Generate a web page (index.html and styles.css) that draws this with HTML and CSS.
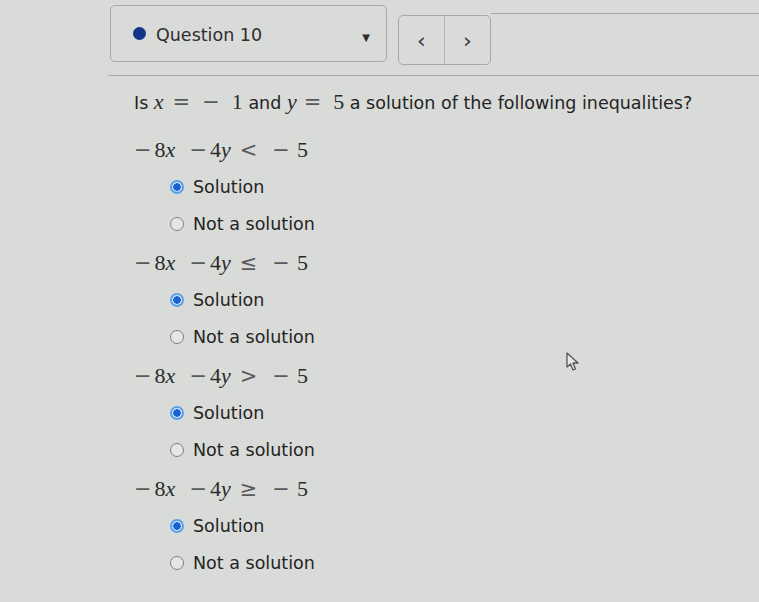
FILE: index.html
```html
<!DOCTYPE html>
<html>
<head>
<meta charset="utf-8">
<link rel="stylesheet" href="styles.css">
</head>
<body>
<div class="header">
  <div class="select">
    <span class="dot"></span>
    <span class="qlabel">Question 10</span>
    <span class="caret">&#9660;</span>
  </div>
  <div class="nav">
    <span class="navbtn">&lsaquo;</span>
    <span class="navbtn">&rsaquo;</span>
  </div>
  <div class="topline"></div>
</div>
<div class="rule"></div>
<div class="content">
  <p class="question">Is <span class="m"><i>x</i><span class="op eq1">=</span><span class="op mn1">&minus;</span>1</span> and <span class="m"><i>y</i><span class="op eq2">=</span>5</span> a solution of the following inequalities?</p>

  <div class="block">
    <div class="ineq m"><span class="op lead">&minus;</span>8<i>x</i><span class="op bin">&minus;</span>4<i>y</i><span class="op rel">&lt;</span><span class="op neg">&minus;</span>5</div>
    <div class="opt"><span class="radio on"></span>Solution</div>
    <div class="opt"><span class="radio"></span>Not a solution</div>
  </div>
  <div class="block">
    <div class="ineq m"><span class="op lead">&minus;</span>8<i>x</i><span class="op bin">&minus;</span>4<i>y</i><span class="op rel">&le;</span><span class="op neg">&minus;</span>5</div>
    <div class="opt"><span class="radio on"></span>Solution</div>
    <div class="opt"><span class="radio"></span>Not a solution</div>
  </div>
  <div class="block">
    <div class="ineq m"><span class="op lead">&minus;</span>8<i>x</i><span class="op bin">&minus;</span>4<i>y</i><span class="op rel">&gt;</span><span class="op neg">&minus;</span>5</div>
    <div class="opt"><span class="radio on"></span>Solution</div>
    <div class="opt"><span class="radio"></span>Not a solution</div>
  </div>
  <div class="block">
    <div class="ineq m"><span class="op lead">&minus;</span>8<i>x</i><span class="op bin">&minus;</span>4<i>y</i><span class="op rel">&ge;</span><span class="op neg">&minus;</span>5</div>
    <div class="opt"><span class="radio on"></span>Solution</div>
    <div class="opt"><span class="radio"></span>Not a solution</div>
  </div>
</div>
<svg class="cursor" width="14" height="20" viewBox="0 0 14 20"><path d="M1 1 L1 15 L4.5 12 L7 18 L9.5 17 L7 11 L12 11 Z" fill="#e8e8e6" stroke="#555" stroke-width="1.3" stroke-linejoin="round"/></svg>
</body>
</html>
```
FILE: styles.css
```css
html, body {
  margin: 0;
  padding: 0;
}
body {
  background: #d9dbd8;
  font-family: "DejaVu Sans", "Noto Sans", sans-serif;
  color: #242424;
  width: 759px;
  height: 602px;
  overflow: hidden;
  position: relative;
}
.header {
  display: flex;
  align-items: flex-start;
  padding-left: 110px;
  padding-top: 5px;
}
.select {
  box-sizing: border-box;
  width: 277px;
  height: 57px;
  border: 1px solid #a9aaa8;
  border-radius: 5px;
  display: flex;
  align-items: center;
  padding-left: 22px;
  padding-right: 16px;
}
.dot {
  width: 13px;
  height: 13px;
  border-radius: 50%;
  background: #14358a;
  margin-right: 10px;
}
.qlabel {
  font-size: 17.5px;
  flex: 1;
  color: #2e2e2e;
  margin-top: 2px;
}
.caret {
  font-size: 10px;
  color: #2e2e2e;
  margin-top: 8px;
}
.nav {
  margin-left: 11px;
  margin-top: 10px;
  box-sizing: border-box;
  width: 93px;
  height: 50px;
  border: 1px solid #a9aaa8;
  border-radius: 5px;
  display: flex;
}
.navbtn {
  flex: 1;
  display: flex;
  align-items: center;
  justify-content: center;
  font-size: 22px;
  color: #3a3a3a;
}
.navbtn + .navbtn {
  border-left: 1px solid #b3b4b2;
}
.topline {
  flex: 1;
  margin-top: 8px;
  border-top: 1px solid #a3a5a3;
}
.rule {
  margin-left: 108px;
  margin-top: 10px;
  border-top: 1px solid #a8aaa8;
}
.content {
  padding-left: 134px;
  padding-top: 14px;
}
.question {
  margin: 0;
  font-size: 17.5px;
  line-height: 24px;
}
.m {
  font-family: "Liberation Serif", "DejaVu Serif", serif;
  font-size: 22px;
  color: #2b2b2b;
}
.m i {
  font-family: "Liberation Serif", serif;
  font-size: 22px;
}
.op {
  display: inline-block;
  font-family: "DejaVu Sans", sans-serif;
  font-size: 21px;
  color: #5a5a5a;
}
.eq1 { margin: 0 12px 0 9px; }
.mn1 { margin: 0 12px 0 0; }
.eq2 { margin: 0 12px 0 7px; }
.lead { margin: 0 3px 0 0; }
.bin { margin: 0 3px 0 14px; }
.rel { margin: 0 15px 0 9px; }
.neg { margin: 0 7px 0 0; }
.block {
  display: flex;
  flex-direction: column;
  margin-top: 7px;
}
.block:first-of-type {
  margin-top: 21px;
}
.ineq {
  line-height: 28px;
  height: 28px;
  margin-bottom: 4px;
}
.opt {
  display: flex;
  align-items: center;
  font-size: 17.5px;
  height: 37px;
  margin-left: 36px;
  color: #242424;
}
.radio {
  box-sizing: border-box;
  width: 14px;
  height: 14px;
  border-radius: 50%;
  border: 1.5px solid #7d7f7e;
  margin-right: 9px;
  background: #e6e7e5;
}
.radio.on {
  border: 2px solid #5aa0e6;
  background: radial-gradient(circle, #1b5fd0 0 3.5px, #d6e6f7 4px);
}
.cursor {
  position: absolute;
  left: 566px;
  top: 352px;
}
```
